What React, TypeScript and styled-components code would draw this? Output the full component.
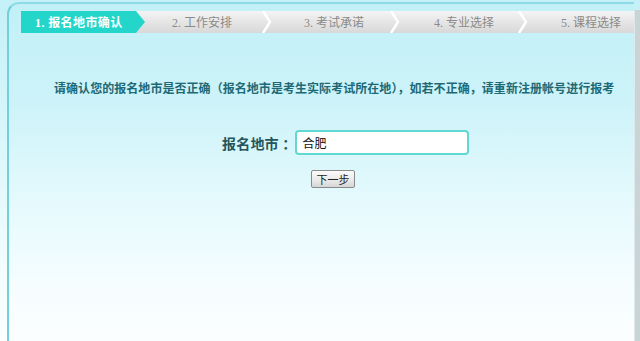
import React from "react";
import styled, { createGlobalStyle } from "styled-components";

const Global = createGlobalStyle`
  html, body { margin: 0; padding: 0; }
  body {
    width: 640px;
    height: 341px;
    overflow: hidden;
    background: linear-gradient(180deg, #c4f0f7 0%, #d9f7fb 40%, #f3fdff 80%, #fafeff 100%);
    font-family: "Liberation Serif", "Noto Sans CJK SC", serif;
  }
`;

const Page = styled.div`
  display: flex;
  height: 341px;
  padding-top: 2px;
  padding-left: 7px;
  box-sizing: border-box;
`;

const Panel = styled.div`
  flex: 1;
  display: flex;
  flex-direction: column;
  border-top: 2px solid #8edbe5;
  border-left: 2px solid #73cfdc;
  border-top-left-radius: 12px;
  background: linear-gradient(180deg, #c2f0f7 0%, #cdf3f9 30%, #e6fafd 60%, #f6fdff 85%, #fbfeff 100%);
  padding: 7px 0 0 12px;
`;

const Scroll = styled.div`
  width: 6px;
  margin-top: 8px;
  background: #c8d4d6;
  border-left: 1px solid #dfe8ea;
`;

const StepBar = styled.div`
  display: flex;
  height: 22px;
  background: linear-gradient(180deg, #f4f4f4 0%, #e4e4e4 55%, #d8d8d8 100%);
`;

const ActiveStep = styled.div`
  width: 124px;
  flex: none;
  display: flex;
  align-items: center;
  padding-left: 14px;
  box-sizing: border-box;
  background: #24d6ca;
  clip-path: polygon(0 0, calc(100% - 9px) 0, 100% 50%, calc(100% - 9px) 100%, 0 100%);
  color: #ffffff;
  font-size: 12px;
  font-weight: bold;
  letter-spacing: 0.4px;
`;

const Step = styled.div<{ $w: number; $pad: number }>`
  width: ${(p) => p.$w}px;
  flex: none;
  position: relative;
  display: flex;
  align-items: center;
  padding-left: ${(p) => p.$pad}px;
  box-sizing: border-box;
  color: #8a8a8a;
  font-size: 12px;
`;

const Chevron = styled.svg`
  position: absolute;
  right: -4px;
  top: 0;
`;

const Message = styled.div`
  margin-top: 47px;
  padding-left: 33px;
  font-family: "Noto Sans CJK SC", sans-serif;
  font-weight: bold;
  font-size: 12px;
  line-height: 16px;
  color: #1d6a76;
  letter-spacing: 0.05px;
`;

const FieldRow = styled.div`
  display: flex;
  align-items: center;
  margin-top: 34px;
  padding-left: 201px;
`;

const Label = styled.label`
  font-family: "Noto Sans CJK SC", sans-serif;
  font-weight: bold;
  font-size: 14px;
  color: #24555b;
  letter-spacing: 0.2px;
  margin-right: -1px;
`;

const Input = styled.input`
  width: 174px;
  height: 25px;
  box-sizing: border-box;
  border: 2px solid #62d8d2;
  border-radius: 4px;
  background: #ffffff;
  padding: 0 5px;
  font-family: "Noto Sans CJK SC", sans-serif;
  font-size: 12px;
  color: #111;
  outline: none;
`;

const ButtonRow = styled.div`
  display: flex;
  margin-top: 15px;
  padding-left: 290px;
`;

const NextButton = styled.button`
  width: 44px;
  height: 18px;
  padding: 0;
  border: 1px solid #8a8a8a;
  border-radius: 2px;
  background: linear-gradient(180deg, #fbfbfb 0%, #e8e8e8 60%, #d6d6d6 100%);
  font-family: "Noto Sans CJK SC", sans-serif;
  font-size: 11px;
  color: #222;
`;

const ChevronMark = () => (
  <Chevron width="12" height="22" viewBox="0 0 12 22">
    <polyline points="2,0 9,11 2,22" fill="none" stroke="#ffffff" strokeWidth="2.5" />
  </Chevron>
);

const steps = [
  { label: "2. 工作安排", w: 124, pad: 27 },
  { label: "3. 考试承诺", w: 128, pad: 35 },
  { label: "4. 专业选择", w: 128, pad: 37 },
  { label: "5. 课程选择", w: 109, pad: 36 },
];

export default function App() {
  return (
    <>
      <Global />
      <Page>
        <Panel>
          <StepBar>
            <ActiveStep>1. 报名地市确认</ActiveStep>
            {steps.map((s, i) => (
              <Step key={s.label} $w={s.w} $pad={s.pad}>
                {s.label}
                {i < steps.length - 1 && <ChevronMark />}
              </Step>
            ))}
          </StepBar>
          <Message>
            请确认您的报名地市是否正确（报名地市是考生实际考试所在地），如若不正确，请重新注册帐号进行报考
          </Message>
          <FieldRow>
            <Label>报名地市 ：</Label>
            <Input defaultValue="合肥" />
          </FieldRow>
          <ButtonRow>
            <NextButton>下一步</NextButton>
          </ButtonRow>
        </Panel>
        <Scroll />
      </Page>
    </>
  );
}
